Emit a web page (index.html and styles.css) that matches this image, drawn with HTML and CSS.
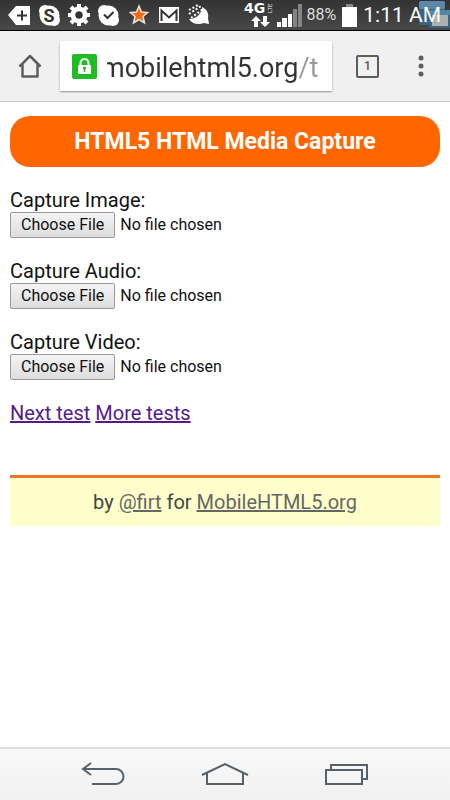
FILE: index.html
```html
<!DOCTYPE html>
<html lang="en">
<head>
    <meta charset="UTF-8">
    <meta name="viewport" content="width=device-width, initial-scale=1.0">
    <title>HTML5 HTML Media Capture</title>
    <link rel="stylesheet" href="styles.css">
</head>
<body>
    <div class="status">
        <div class="notifications">
            <svg width="24" height="30" viewBox="0 0 24 30">
                <path d="M1 15l8-9h14v19H9z" fill="#fff"/>
                <path d="M10 15.500h10M15 10.500v10" stroke="#333" stroke-width="2"/>
            </svg>
            <svg width="24" height="30" viewBox="0 0 24 30" fill="#fff">
                <circle cx="8" cy="11" r="6"/>
                <circle cx="17" cy="20" r="6"/>
                <circle cx="12.500" cy="15.500" r="10"/>
                <text class="skype" x="12" y="22" text-anchor="middle">S</text>
            </svg>
            <svg width="24" height="30" viewBox="0 0 24 30">
                <circle cx="12" cy="15" r="6" fill="none" stroke="#fff" stroke-width="5"/>
                <path d="M12 4v5M12 21v5M1 15h5M18 15h5M4 7l4 4M16 19l4 4M20 7l-4 4M8 19l-4 4" stroke="#fff" stroke-width="4"/>
                <circle cx="12" cy="15" r="3.500" fill="#333"/>
            </svg>
            <svg width="24" height="30" viewBox="0 0 24 30" fill="#fff">
                <circle cx="7" cy="11" r="6"/>
                <circle cx="16" cy="20" r="6"/>
                <circle cx="11.500" cy="15.500" r="10"/>
                <path d="M7 14.500l3.500 3.500 6-6" fill="none" stroke="#333" stroke-width="2"/>
            </svg>
            <svg width="24" height="30" viewBox="0 0 24 30">
                <path d="M12 6l2.500 6 6 .5-4.500 4 1.500 6.500L12 19.500 6.500 23 8 16.500l-4.500-4 6-.5z" fill="#f26a16" stroke="#eee3d8" stroke-width="1.500"/>
            </svg>
            <svg width="24" height="30" viewBox="0 0 24 30">
                <rect x="2" y="7" width="20" height="16" fill="#fff"/>
                <path d="M4.500 21V10.500l7.500 7 7.500-7V21" fill="none" stroke="#333" stroke-width="2"/>
            </svg>
            <svg width="24" height="30" viewBox="0 0 24 30">
                <path d="M2 19c4 0 9-2 11-6 2-2 2-4 2-6 5 2 7 7 6 11l1 6-5-1c-6 2-12 1-15-4z" fill="#fff"/>
                <path d="M2 14l12-8M2 10l9-5M4 18l12-9" stroke="#fff" stroke-width="2" stroke-dasharray="2 2"/>
            </svg>
        </div>
        <div class="system">
            <svg class="network" width="30" height="30" viewBox="0 0 30 30">
                <text class="generation" x="0" y="13">4G</text>
                <text class="lte" transform="translate(23 13) rotate(-90)">LTE</text>
                <path d="M12 16l5 5h-3v6h-4v-6H7zM21 27l5-5h-3v-6h-4v6h-3z" fill="#fff"/>
            </svg>
            <svg class="signal" width="26" height="30" viewBox="0 0 26 30">
                <path d="M0 22h4v5H0zM5 18h5v9H5zM11 14h4v13h-4z" fill="#fff"/>
                <path d="M16 9h4v18h-4zM21 4h4v23h-4z" fill="#858585"/>
            </svg>
            <span class="percent">88%</span>
            <svg class="battery" width="16" height="30" viewBox="0 0 16 30">
                <path d="M5 4h7v3H5z" fill="#888"/>
                <path d="M1 7h15v20H1z" fill="#fff"/>
            </svg>
            <span class="clock">1:11 AM</span>
        </div>
        <svg class="floating" width="32" height="29" viewBox="0 0 32 29">
            <rect x="1" y="1" width="26" height="24" rx="2" fill="#376f92"/>
            <rect x="1" y="1" width="26" height="8" rx="2" fill="#64a0c4"/>
            <rect x="11" y="10" width="21" height="18" fill="#376f92"/>
            <rect x="11" y="10" width="21" height="5" fill="#5a9abf"/>
            <rect x="14" y="15" width="16" height="11" fill="#c8ccce"/>
        </svg>
    </div>

    <header class="toolbar">
        <button class="home" aria-label="Home">
            <svg width="24" height="26" viewBox="0 0 24 26" fill="none" stroke="#5d5d5d" stroke-width="2.500" stroke-linejoin="round">
                <path d="M1.500 13.500L12 3l10.500 10.500M4.500 11v12.500h15V11"/>
            </svg>
        </button>
        <div class="omnibox">
            <svg width="25" height="25" viewBox="0 0 25 25">
                <rect width="25" height="25" rx="2" fill="#1fbd23"/>
                <path d="M8.500 12V9a4 4 0 0 1 8 0v3" fill="none" stroke="#fff" stroke-width="2"/>
                <rect x="6" y="11" width="13" height="9" rx="1" fill="#fff"/>
                <circle cx="12.500" cy="14" r="1.500" fill="#1fbd23"/>
                <path d="M12.500 14v4" stroke="#1fbd23" stroke-width="1.500"/>
            </svg>
            <div class="address">
                <input type="text" class="url" aria-label="Address" value="mobilehtml5.org/t">
            </div>
        </div>
        <button class="tabs" aria-label="Open tabs">1</button>
        <button class="menu" aria-label="Menu">
            <svg width="6" height="22" viewBox="0 0 6 22" fill="#5d5d5d">
                <circle cx="3" cy="3" r="2.500"/>
                <circle cx="3" cy="11" r="2.500"/>
                <circle cx="3" cy="19" r="2.500"/>
            </svg>
        </button>
    </header>

    <main>
        <h1>HTML5 HTML Media Capture</h1>
        <form>
            <div class="field">
                <label for="image">Capture Image:</label>
                <input type="file" id="image" accept="image/*" capture>
            </div>
            <div class="field">
                <label for="audio">Capture Audio:</label>
                <input type="file" id="audio" accept="audio/*" capture>
            </div>
            <div class="field">
                <label for="video">Capture Video:</label>
                <input type="file" id="video" accept="video/*" capture>
            </div>
        </form>
        <p class="links"><a href="#">Next test</a> <a href="#">More tests</a></p>
        <footer>by <a href="#">@firt</a> for <a href="#">MobileHTML5.org</a></footer>
    </main>

    <nav class="softkeys">
        <button aria-label="Back">
            <svg width="48" height="26" viewBox="0 0 48 26" fill="none" stroke="#56616a" stroke-width="2">
                <path d="M12 1L4 7l8 6M4 7h33a7.500 7.500 0 0 1 0 15H13"/>
            </svg>
        </button>
        <button aria-label="Home screen">
            <svg width="48" height="26" viewBox="0 0 48 26" fill="none" stroke="#56616a" stroke-width="2">
                <path d="M1 13L24 2l23 11M6 11v11h36V11"/>
            </svg>
        </button>
        <button aria-label="Recent apps">
            <svg width="48" height="26" viewBox="0 0 48 26" fill="none" stroke="#56616a" stroke-width="2">
                <path d="M3 8h36v14H3zM8 8V3h36v14h-5"/>
            </svg>
        </button>
    </nav>
</body>
</html>
```

FILE: styles.css
```css
* {
    box-sizing: border-box;
}

body {
    margin: 0;
    min-height: 100vh;
    display: flex;
    flex-direction: column;
    background-color: #fff;
    font-family: Roboto, sans-serif;
    font-size: 20px;
    line-height: 24px;
    color: #111;
}

button {
    padding: 0;
    border: none;
    background: none;
    font-family: inherit;
}

svg {
    display: block;
    flex: none;
}

/* Status bar */
.status {
    position: relative;
    display: flex;
    justify-content: space-between;
    height: 31px;
    padding: 0 9px 0 7px;
    background: linear-gradient(#333, #484848);
    border-bottom: 1px solid #000;
    color: #fff;
}

.notifications {
    display: flex;
    gap: 6px;
}

.skype {
    font-size: 18px;
    font-weight: bold;
    fill: #333;
}

.system {
    position: relative;
    z-index: 1;
    display: flex;
    align-items: center;
}

.network {
    margin-right: 3px;
    fill: #fff;
}

.generation {
    font: bold 14px "DejaVu Sans", sans-serif;
}

.lte {
    font-size: 6px;
    dominant-baseline: hanging;
}

.signal {
    margin-right: 4px;
}

.percent {
    margin-right: 5px;
    font-size: 16px;
    color: #ddd;
}

.battery {
    margin-right: 6px;
}

.clock {
    font-size: 21px;
}

.floating {
    position: absolute;
    top: 0;
    right: 0;
    opacity: 0.8;
}

/* Browser toolbar */
.toolbar {
    display: flex;
    align-items: center;
    height: 71px;
    padding: 0 26px 0 18px;
    background-color: #f0f0f0;
    border-bottom: 1px solid #ccc;
}

.omnibox {
    flex: 1;
    display: flex;
    align-items: center;
    gap: 10px;
    min-width: 0;
    height: 50px;
    margin: 0 24px 0 18px;
    padding: 0 12px;
    background-color: #fff;
    border-radius: 1px;
    box-shadow: 0 1px 2px rgba(0, 0, 0, 0.4);
}

.address {
    flex: 1;
    display: flex;
    min-width: 0;
    overflow: hidden;
}

.url {
    flex: 1;
    min-width: 0;
    margin: 4px 0 0 -6px;
    padding: 0;
    border: none;
    /* the path is lighter than the host */
    background: linear-gradient(to right, #333 197px, #999 197px);
    -webkit-background-clip: text;
    background-clip: text;
    color: transparent;
    font: 27px/36px Roboto, sans-serif;
}

.tabs {
    width: 23px;
    height: 23px;
    margin-right: 39px;
    border: 2px solid #5d5d5d;
    border-radius: 2px;
    font-size: 13px;
    font-weight: 500;
    line-height: 18px;
    color: #5d5d5d;
}

/* Page */
main {
    flex: 1;
    padding: 14px 10px;
}

h1 {
    margin: 0 0 21px;
    padding: 12px;
    background-color: #f60;
    border-radius: 20px;
    color: #fff;
    font-size: 23px;
    line-height: 27px;
    text-align: center;
}

.field {
    margin-bottom: 21px;
}

label {
    display: block;
}

input[type="file"] {
    display: block;
    width: 100%;
    height: 26px;
    font-family: inherit;
    font-size: 16px;
    line-height: 20px;
    color: #111;
}

input::file-selector-button {
    height: 26px;
    margin: 0 5px 0 0;
    padding: 0 10px;
    border: 1px solid #999;
    border-radius: 2px;
    background: linear-gradient(#f4f4f4, #ddd);
    font: inherit;
    color: #111;
}

.links {
    margin: 0 0 50px;
}

.links a {
    color: #551a8b;
}

footer {
    padding: 12px;
    background-color: #ffc;
    border-top: 3px solid #f07522;
    color: #444;
    text-align: center;
}

footer a {
    color: #666;
}

/* Soft keys */
.softkeys {
    display: flex;
    justify-content: center;
    gap: 74px;
    height: 53px;
    border-top: 2px solid #ddd;
    background: linear-gradient(#f9f9f9, #f1f1f1);
}
```
